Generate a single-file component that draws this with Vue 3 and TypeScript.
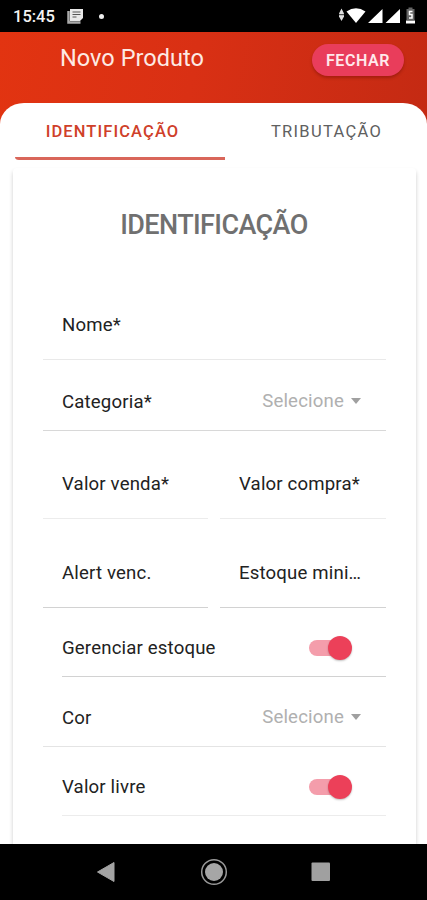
<script setup lang="ts">
import { ref } from 'vue'

interface Field {
  label: string
  kind: 'input' | 'select' | 'toggle'
}
interface Row {
  id: string
  fields: Field[]
}

const tabs = ['IDENTIFICAÇÃO', 'TRIBUTAÇÃO']
const active = ref(0)

const rows: Row[] = [
  { id: 'nome', fields: [{ label: 'Nome*', kind: 'input' }] },
  { id: 'categoria', fields: [{ label: 'Categoria*', kind: 'select' }] },
  { id: 'valores', fields: [{ label: 'Valor venda*', kind: 'input' }, { label: 'Valor compra*', kind: 'input' }] },
  { id: 'estoque', fields: [{ label: 'Alert venc.', kind: 'input' }, { label: 'Estoque mini…', kind: 'input' }] },
  { id: 'gerenciar', fields: [{ label: 'Gerenciar estoque', kind: 'toggle' }] },
  { id: 'cor', fields: [{ label: 'Cor', kind: 'select' }] },
  { id: 'livre', fields: [{ label: 'Valor livre', kind: 'toggle' }] },
]
</script>

<template>
  <div class="screen">
    <div class="status">
      <span class="clock">15:45</span>
      <svg class="news" width="17" height="16" viewBox="0 0 17 16">
        <path d="M1.500 3v11.500h12" fill="none" stroke="#aaa" stroke-width="2.500" />
        <path d="M3 1h13v9l-3 3H3z" fill="#e8e8e8" />
        <path d="M5.500 4h8M5.500 6.500h8M5.500 9h4" stroke="#555" stroke-width="1.200" />
      </svg>
      <i class="dot"></i>
      <svg class="signals" width="78" height="18" viewBox="0 0 78 18">
        <path d="M3.500 1.500L6 6.500v3L3.500 14 1 9.500v-3z" fill="#ddd" />
        <path d="M.5 7.700h6" stroke="#000" stroke-width=".8" />
        <path d="M8.500 4.500Q18 -2.200 27.500 4.500L18 16z" fill="#fff" />
        <path d="M44.500 2v14H30zM62 2v14H47.500z" fill="#fff" />
        <path d="M68.500 2h2V.5h4V2h2v11h-8z" fill="#666" />
        <path d="M68 13.500h9v3h-9z" fill="#fff" />
        <path d="M74.500 4.500h-3v3h2.500v3.500h-3" fill="none" stroke="#fff" stroke-width="1.500" />
      </svg>
    </div>

    <header class="bar">
      <h1 class="bar-title">Novo Produto</h1>
      <button class="close" type="button">FECHAR</button>
    </header>

    <main class="sheet">
      <nav class="tabs">
        <button
          v-for="(tab, i) in tabs"
          :key="tab"
          type="button"
          class="tab"
          :class="{ active: active === i }"
          @click="active = i"
        ><span>{{ tab }}</span></button>
      </nav>
      <section class="card">
        <h2 class="heading">IDENTIFICAÇÃO</h2>
        <div v-for="row in rows" :key="row.id" class="row" :class="[row.id, { pair: row.fields.length === 2 }]">
          <div v-for="field in row.fields" :key="field.label" class="field" :class="field.kind">
            <span class="label">{{ field.label }}</span>
            <span v-if="field.kind === 'select'" class="choice">Selecione<i class="caret"></i></span>
            <span v-if="field.kind === 'toggle'" class="switch"><i class="knob"></i></span>
          </div>
        </div>
      </section>
    </main>

    <footer class="nav">
      <svg width="20" height="22" viewBox="0 0 20 22"><path d="M1.500 11L18 1.500v19z" fill="#a3a3a3" stroke="#a3a3a3" stroke-linejoin="round" /></svg>
      <svg width="28" height="28" viewBox="0 0 28 28">
        <circle cx="14" cy="14" r="12.300" fill="none" stroke="#999" stroke-width="1.500" />
        <circle cx="14" cy="14" r="9" fill="#a6a6a6" />
      </svg>
      <svg width="20" height="20" viewBox="0 0 20 20"><rect x=".5" y=".5" width="18.500" height="18.500" rx="1" fill="#a0a0a0" /></svg>
    </footer>
  </div>
</template>

<style>
body { margin: 0; background: #fff; }
</style>

<style scoped>
.screen {
  display: flex;
  flex-direction: column;
  width: 427px;
  height: 900px;
  overflow: hidden;
  font-family: Roboto, sans-serif;
  background: linear-gradient(100deg, #e23411 0%, #d93014 45%, #c42a13 100%) 0 32px / 427px 100px no-repeat #fff;
}
button { border: 0; padding: 0; font-family: inherit; }
.status {
  display: flex;
  align-items: center;
  height: 32px;
  flex: none;
  box-sizing: border-box;
  padding: 0 11px 0 13px;
  background: #000;
  color: #f4f4f4;
}
.clock { width: 42px; font-size: 16.5px; font-weight: 500; line-height: 20px; padding-top: 2px; white-space: nowrap; }
.news { margin-left: 12px; }
.dot { width: 5px; height: 5px; margin-left: 15px; border-radius: 50%; background: #eee; }
.signals { margin-left: auto; }
.bar {
  display: flex;
  justify-content: space-between;
  align-items: flex-start;
  height: 71px;
  flex: none;
  box-sizing: border-box;
  padding: 12px 23px 0 60px;
}
.bar-title { margin: 0; font-size: 23.5px; line-height: 29px; font-weight: 400; letter-spacing: 0.05px; color: #fdeae4; }
.close {
  width: 92px;
  height: 32px;
  border-radius: 16px;
  background: #e93d5b;
  color: #ffe9ec;
  font-size: 16px;
  font-weight: 600;
  letter-spacing: 0.6px;
  box-shadow: 0 2px 3px rgba(80, 0, 0, 0.3);
}
.sheet {
  flex: 1;
  min-height: 0;
  display: flex;
  flex-direction: column;
  border-radius: 24px 24px 0 0 / 21px 21px 0 0;
  background: #fff;
}
.tabs { display: grid; grid-template-columns: 210px 202px; padding-left: 15px; flex: none; }
.tab {
  height: 57px;
  box-sizing: border-box;
  border-bottom: 3px solid transparent;
  background: none;
  color: #606060;
  font-size: 16.5px;
  font-weight: 500;
  letter-spacing: 1.1px;
  padding-top: 2px;
}
.tab.active { color: #cf4029; border-bottom-color: #d9665a; padding-right: 15px; border-bottom-left-radius: 4px 3px; }
.tab:last-child { font-weight: 400; letter-spacing: 1.3px; padding-left: 1px; }
.card {
  flex: 1;
  min-height: 0;
  margin: 8px 11px 0 13px;
  padding: 0 30px;
  border-radius: 4px 4px 0 0;
  box-shadow: 0 3px 4px rgba(0, 0, 0, 0.2);
  clip-path: inset(-1px -5px 0 -5px);
}
.heading { margin: 40px 0 0; height: 79px; line-height: 34px; font-size: 27px; font-weight: 500; letter-spacing: -0.6px; text-align: center; text-indent: -1px; color: #707070; white-space: nowrap; }
.row { display: grid; height: 70px; box-sizing: border-box; color: #222; --line: #dedede; }
.row.pair { grid-template-columns: 165px 166px; column-gap: 12px; }
.field {
  min-width: 0;
  display: flex;
  justify-content: space-between;
  align-items: center;
  box-sizing: border-box;
  padding: 0 25px 0 19px;
  border-bottom: 1px solid var(--line);
}
.input + .input { padding-right: 10px; }
.label { font-size: 18.6px; line-height: 24px; letter-spacing: 0.17px; white-space: nowrap; }
.row.nome { height: 73px; --line: #e9e9e9; }
.row.nome .field { padding-top: 4px; }
.row.categoria { height: 71px; --line: #d8d8d8; }
.row.categoria .field { padding-top: 13px; }
.row.valores { height: 88px; --line: #ececec; }
.row.valores .field { padding-top: 18px; }
.row.estoque { height: 89px; --line: #d2d2d2; }
.row.estoque .field { padding-top: 19px; }
.row.gerenciar { height: 69px; --line: #d2d2d2; }
.row.livre { height: 69px; --line: #ececec; }
.row.cor { --line: #e4e4e4; }
.row.cor .field, .row.gerenciar .field, .row.livre .field { padding-top: 12px; }
.field.toggle { margin-left: 19px; padding-left: 0; padding-right: 35px; }
.choice { display: flex; align-items: center; font-size: 18.6px; line-height: 22px; letter-spacing: 0.17px; color: #b0b0b0; margin-bottom: 1px; }
.caret { margin-left: 7px; border: 5.5px solid transparent; border-top: 6px solid #a0a0a0; border-bottom: 0; }
.switch { position: relative; width: 42px; height: 16px; border-radius: 8px; background: #f49dab; }
.knob {
  position: absolute;
  right: -1px;
  top: -4px;
  width: 24px;
  height: 24px;
  border-radius: 50%;
  background: #ec4059;
  box-shadow: 0 1px 2px rgba(0, 0, 0, 0.25);
}
.nav {
  display: flex;
  align-items: center;
  justify-content: space-between;
  height: 56px;
  flex: none;
  box-sizing: border-box;
  padding: 0 96px 0 96px;
  background: #000;
}
</style>
